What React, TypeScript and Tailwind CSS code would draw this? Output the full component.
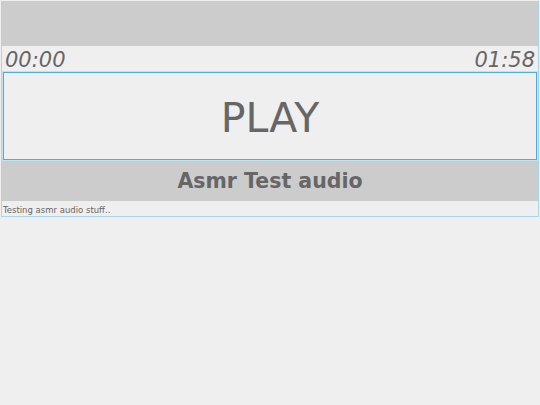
export default function App() {
  return (
    <div className="w-[540px] h-[405px] bg-[#efefef] pt-px pl-px font-['DejaVu_Sans',Verdana,sans-serif] text-[#666]">
      <div className="w-[538px] border border-[#a9d6ea] flex flex-col">
        <div className="h-[44px] bg-[#cccccc]" />
        <div className="h-[26px] flex items-end justify-between px-[3px] italic text-[21px] leading-[24px]">
          <span>00:00</span>
          <span>01:58</span>
        </div>
        <div className="mx-px h-[88px] border border-[#4eaed4] shadow-[0_0_0_1px_#bfe3f2] flex items-center justify-center text-[41px] pt-[5px]">
          PLAY
        </div>
        <div className="mt-px h-[40px] bg-[#cccccc] flex items-center justify-center font-bold text-[20.5px]">
          Asmr Test audio
        </div>
        <div className="h-[15px] text-[8.5px] leading-[15px] pl-px pt-[2px]">Testing asmr audio stuff..</div>
      </div>
    </div>
  );
}
